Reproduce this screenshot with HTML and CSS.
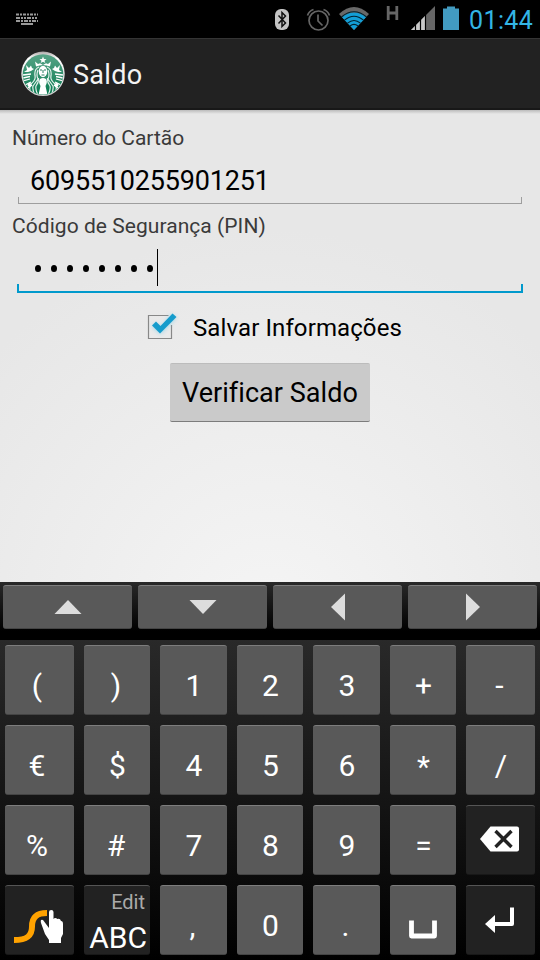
FILE: index.html
```html
<!DOCTYPE html>
<html lang="pt-BR">
<head>
<meta charset="utf-8">
<title>Saldo</title>
<link rel="stylesheet" href="styles.css">
</head>
<body>
<header class="status">
  <svg class="kbd" width="22" height="12" viewBox="0 0 22 12"><g fill="none" stroke="#999" stroke-width="2"><path d="M0 1.500H22" stroke-dasharray="3 1 2 1"/><path d="M0 5H22" stroke-dasharray="4 1 2 1 2 1"/><path d="M0 8H22" stroke-dasharray="4 1 2 1"/><path d="M5 11H17"/></g></svg>
  <svg width="266" height="38" viewBox="274 0 266 38">
    <rect x="275" y="9" width="14" height="21" rx="6" fill="#c4c4c4"/>
    <path d="M278.500 15.500L285.500 23L282 26.500V12.500L285.500 16L278.500 23.500" fill="none" stroke="#111" stroke-width="1.500"/>
    <g fill="none" stroke="#666" stroke-width="1.700"><circle cx="318.500" cy="20.500" r="9.500"/><path d="M318 14.500V21L322.500 25.500M307.500 15.500Q309 11 313.500 9.500M323.500 9.500Q328 11 329.500 15.500"/></g>
    <path d="M339 14Q354 0 369 14L354 30Z" fill="#686868"/>
    <path d="M342 17.300Q354 7.500 366 17.300L354 30Z" fill="#139fd7"/>
    <g fill="none" stroke="#02212d" stroke-width="1.100"><path d="M341.500 17Q354 6.500 366.500 17M344.500 20.200Q354 12.300 363.500 20.200M347.500 23.200Q354 17.700 360.500 23.200M350 26Q354 22.800 358 26"/></g>
    <path d="M388.200 6V20M396.800 6V20M388 13H397" fill="none" stroke="#666" stroke-width="2.800"/>
    <path d="M411 30L435 6V30Z" fill="#666"/><path d="M411 30L425 16V30Z" fill="#c9c9c9"/>
    <path d="M415.500 24V30M420.500 19V30M425.500 14V30" stroke="#000" stroke-width="1.200"/>
    <path d="M443 8.500H447V6.500H455V8.500H459V30H443Z" fill="#429bc1"/>
  </svg>
  <span class="clock">01:44</span>
</header>
<div class="bar">
  <svg width="44" height="46" viewBox="0 0 44 46">
    <defs><linearGradient id="rim" x1="0" y1="0" x2="0" y2="1"><stop offset="0" stop-color="#aaa4a4"/><stop offset=".15" stop-color="#fff"/><stop offset="1" stop-color="#ccc"/></linearGradient><linearGradient id="gr" x1="0" y1="0" x2="0" y2="1"><stop offset="0" stop-color="#58a487"/><stop offset="1" stop-color="#087a50"/></linearGradient><clipPath id="disc"><circle cx="22" cy="23.500" r="20"/></clipPath></defs>
    <ellipse cx="22" cy="22.800" rx="21.700" ry="22.300" fill="url(#rim)"/><circle cx="22" cy="23.500" r="20.300" fill="url(#gr)"/>
    <g clip-path="url(#disc)">
      <path d="M22 5.500L23 8L25.500 8L23.500 9.700L24.300 12L22 10.700L19.700 12L20.500 9.700L18.500 8L21 8ZM14 10.500L17 13L19 12.300L22 14L25 12.300L27 13L30 10.500L29 15.500Q22 12.500 15 15.500Z" fill="#fff"/>
      <g fill="none" stroke="#e4f1ec" stroke-width="1.200"><path d="M18 16Q13 18 14 25Q15 29 10 33Q7 37 11 45M17 19Q15 24 17 28Q15 31 12 35Q11 39 15 46M17.500 27Q18 31 15 35Q14 39 18 46M26 16Q31 18 30 25Q29 29 34 33Q37 37 33 45M27 19Q29 24 27 28Q29 31 32 35Q33 39 29 46M26.500 27Q26 31 29 35Q30 39 26 46"/></g>
      <ellipse cx="22" cy="20.500" rx="4.200" ry="5.800" fill="#fff"/><path d="M19 19H21M23 19H25M22 19V22M20.500 24H23.500" stroke="#287c60" stroke-width="1"/>
      <path d="M19 28Q22 26 25 28Q27 31 24.500 35L27 46H17L19.500 35Q17 31 19 28Z" fill="#fff"/>
      <path d="M5 14L8 17L10 14.500L11 17L13 18L10 20L7 21L3 21L6 19ZM39 14L36 17L34 14.500L33 17L31 18L34 20L37 21L41 21L38 19Z" fill="#fff"/>
      <path d="M2 24L10 23M2 27L9 25.500M2 30L9 28M4 34L10 31M7 37L11 34M42 24L34 23M42 27L35 25.500M42 30L35 28M40 34L34 31M37 37L33 34" stroke="#fff" stroke-width="1.300"/>
      <circle cx="8.500" cy="34" r="2" fill="#fff"/><circle cx="35.500" cy="34" r="2" fill="#fff"/>
    </g>
  </svg>
  <span class="title">Saldo</span>
</div>
<main class="form">
  <div class="label"><span class="l1">Número do Cartão</span></div>
  <div class="field"><span class="number">6095510255901251</span></div>
  <div class="label second"><span class="l2">Código de Segurança (PIN)</span></div>
  <div class="field active"><div class="dots"><i></i><i></i><i></i><i></i><i></i><i></i><i></i><i></i></div><b class="caret"></b></div>
  <div class="check">
    <svg width="34" height="32" viewBox="0 0 34 32"><defs><filter id="glow" x="-30%" y="-30%" width="160%" height="160%"><feGaussianBlur stdDeviation="2"/></filter></defs><path d="M23.500 4.500H3.500V27.500H26.500V14" fill="none" stroke="#888" stroke-width="1.200"/><path d="M7 15.500L11 12L15.500 16.500L27 3L31 7L15.500 23Z" fill="#6ec9e8" opacity=".6" filter="url(#glow)"/><path d="M7 14.500L11 10.500L15.500 15L27.500 2.500L31.500 6L15 22.500Z" fill="#169ccc"/></svg>
    <span class="save">Salvar Informações</span>
  </div>
  <button class="verify"><span>Verificar Saldo</span></button>
</main>
<section class="arrows">
  <div class="key"><svg width="28" height="28"><path d="M.5 21L14 7L27.500 21Z" fill="#ddd"/></svg></div>
  <div class="key"><svg width="28" height="28"><path d="M.5 7L14 21L27.500 7Z" fill="#ddd"/></svg></div>
  <div class="key"><svg width="28" height="28"><path d="M21 .5L7 14L21 27.500Z" fill="#ddd"/></svg></div>
  <div class="key"><svg width="28" height="28"><path d="M7 .5L21 14L7 27.500Z" fill="#ddd"/></svg></div>
</section>
<section class="pad">
  <div class="key first">(</div><div class="key side">)</div><div class="key">1</div><div class="key">2</div><div class="key">3</div><div class="key">+</div><div class="key side">-</div>
  <div class="key first">€</div><div class="key">$</div><div class="key">4</div><div class="key">5</div><div class="key">6</div><div class="key star">*</div><div class="key">/</div>
  <div class="key first">%</div><div class="key side">#</div><div class="key">7</div><div class="key">8</div><div class="key">9</div><div class="key">=</div>
  <div class="key dark"><svg width="69" height="70"><path d="M14 34L24.500 21.500H51Q53 21.500 53 23.500V44.500Q53 46.500 51 46.500H24.500Z" fill="#fff"/><path d="M29.500 26L45.500 42M45.500 26L29.500 42" stroke="#222" stroke-width="3.400"/></svg></div>
  <div class="key dark"><svg width="69" height="70"><path d="M9 55C22 55 27 51 27 41.500C27 32 32 28 42 28" fill="none" stroke="#ffa200" stroke-width="6"/><path d="M44 27Q44 25 46.300 25Q48.500 25 48.500 27V34Q50 32 52.500 34Q55 33 56 36Q58 36 58 39V49L56 53V58H44V55L40 49L36 38Q35 34 38 35L44 43Z" fill="#fff"/></svg></div>
  <div class="key dark mode"><span class="edit">Edit</span><span class="abc">ABC</span></div>
  <div class="key side">,</div><div class="key">0</div><div class="key side">.</div>
  <div class="key"><svg width="66" height="70"><path d="M21.500 35.500V51H44.500V35.500" fill="none" stroke="#fff" stroke-width="4.800" stroke-linejoin="round"/></svg></div>
  <div class="key dark"><svg width="69" height="70"><path d="M46 22.500V39H28" fill="none" stroke="#fff" stroke-width="4" stroke-linejoin="round"/><path d="M19 39L29 30V48Z" fill="#fff"/></svg></div>
</section>
</body>
</html>
```
FILE: styles.css
```css
* { box-sizing: border-box; }
body { margin: 0; width: 540px; height: 960px; overflow: hidden; font-family: Roboto, sans-serif; display: flex; flex-direction: column; }
svg { display: block; flex: none; }
span { white-space: nowrap; }
.status { height: 38px; background: #000; display: flex; justify-content: space-between; position: relative; flex: none; }
.kbd { margin: 13px 0 0 16px; }
.clock { position: absolute; left: 469px; top: 6px; font-size: 25px; line-height: 29px; color: #33b5e5; letter-spacing: .4px; }
.bar { height: 72px; flex: none; background: #222; border-top: 1px solid #343434; border-bottom: 2px solid #181818; display: flex; padding-left: 21px; align-items: center; }
.title { color: #f3f3f3; font-size: 27px; margin: 2px 0 0 8px; letter-spacing: .3px; }
.form { height: 472px; flex: none; background: linear-gradient(#bbb, transparent 4px), radial-gradient(ellipse 380px 400px at 50% 110%, #f5f5f5, #e7e7e7); display: flex; flex-direction: column; }
.label { height: 25px; margin: 15px 0 0 12px; font-size: 21px; line-height: 26px; color: #3a3a3a; }
.label.second { margin-top: 9px; letter-spacing: .05px; }
.field { height: 54px; margin: 0 18px; padding-left: 12px; display: flex; align-items: center; position: relative; }
.field::after { content: ""; position: absolute; left: 0; right: 0; bottom: 0; height: 6px; border: 1px solid #9e9e9e; border-top: 0; }
.number { font-size: 27px; line-height: 34px; color: #000; margin-top: 7px; letter-spacing: -.2px; }
.field.active { height: 55px; margin: 0 17px; padding-left: 18px; }
.field.active::after { border: 2px solid #0099cc; border-top: 0; height: 7px; }
.dots { display: flex; gap: 10px; margin-top: 6px; }
.dots i { width: 6px; height: 7px; border-radius: 50%; background: #000; }
.caret { width: 1px; height: 37px; background: #000; margin: 4px 0 0 4px; }
.check { height: 32px; margin: 18px 0 0 145px; display: flex; align-items: center; }
.save { font-size: 24px; margin: 2px 0 0 14px; color: #000; letter-spacing: .1px; }
.verify { width: 200px; height: 59px; margin: 20px 0 50px 170px; padding: 1px 0 0; border: 0; border-top: 1px solid #bcbcbc; border-bottom: 1px solid #7c7c7c; border-radius: 2px; background: #cacaca; font: 27px Roboto, sans-serif; letter-spacing: .05px; color: #000; }
.arrows { height: 58px; flex: none; background: linear-gradient(#292929, #000 85%); padding: 3px 3px 11px; display: grid; grid-template-columns: repeat(4, 129px); gap: 6px; }
.arrows .key { padding-bottom: 1px; }
.key { background: #595959; border-top: 1px solid #7d7d7d; border-bottom: 1px solid #444; border-radius: 3px; color: #fff; display: flex; align-items: center; justify-content: center; font-size: 30px; overflow: hidden; }
.pad { height: 320px; flex: none; background: linear-gradient(#292929, #000); padding: 5px 5px; display: grid; grid-template-columns: 69px 66px 67px 66px 67px 66px 69px; grid-auto-rows: 70px; gap: 10px; }
.pad .key { padding-top: 11px; padding-left: 1px; }
.pad .side { padding-left: 0; padding-right: 2px; }
.pad .first { padding-left: 0; padding-right: 5px; }
.pad .key:has(svg) { padding: 0; }
.pad .star { padding-top: 13px; }
.pad .dark { background: #222; border-top-color: #555; border-bottom-color: #181818; }
.pad .mode { flex-direction: column; align-items: flex-end; justify-content: flex-start; padding: 3px 5px 0 0; }
.edit { color: #aaa; font-size: 20px; line-height: 26px; }
.abc { font-size: 30px; line-height: 36px; margin: 5px -2px 0 0; }
```
